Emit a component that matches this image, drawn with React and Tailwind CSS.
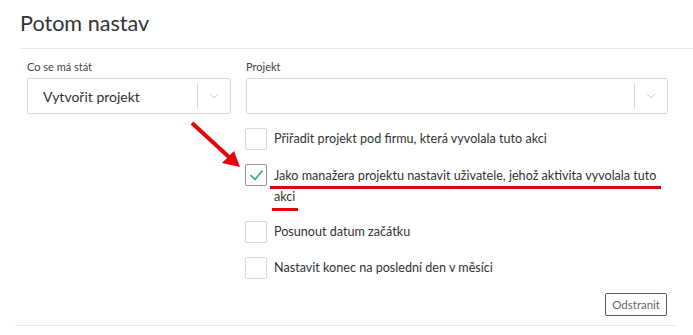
import React from 'react';

const Chevron = () => (
    <svg width="10" height="6" viewBox="0 0 10 6" fill="none">
        <path d="M1 1l4 4 4-4" stroke="#c5cad3" strokeWidth="1" />
    </svg>
);

const Select = ({ value, width }) => (
    <div className={`flex h-[36px] items-center rounded-[2px] border border-[#d6dbe3] bg-white ${width}`}>
        <div className="flex-1 pl-[15px] text-[14px] text-[#333]">{value}</div>
        <div className="h-[26px] w-px bg-[#d6dbe3]" />
        <div className="flex w-[32px] items-center justify-center">
            <Chevron />
        </div>
    </div>
);

const Checkbox = ({ checked }) => (
    <div
        className={`flex h-[22px] w-[22px] shrink-0 items-center justify-center rounded-[2px] border ${
            checked ? 'border-[#8f959e]' : 'border-[#d6dbe3]'
        } bg-white`}
    >
        {checked && (
            <svg width="15" height="12" viewBox="0 0 15 12" fill="none">
                <path d="M1.5 6l4.5 4.5 7.5-9" stroke="#3fae6a" strokeWidth="1.7" />
            </svg>
        )}
    </div>
);

const App = () => {
    return (
        <div className="relative h-[335px] w-[693px] overflow-hidden bg-white font-['Lato',sans-serif] text-[#333]">
            {/* Header */}
            <div className="ml-[20px] flex h-[49px] items-start border-b border-[#e6e6e6] pt-[9px]">
                <h1 className="text-[21.6px] leading-[28px] text-[#333]">Potom nastav</h1>
            </div>

            {/* Fields */}
            <div className="ml-[27px] mt-[11px] flex gap-[15px]">
                <div>
                    <div className="mb-[5px] text-[11px] leading-[13px] text-[#444]">Co se má stát</div>
                    <Select value="Vytvořit projekt" width="w-[204px]" />
                </div>
                <div>
                    <div className="mb-[5px] text-[11px] leading-[13px] text-[#444]">Projekt</div>
                    <Select value="" width="w-[422px]" />
                </div>
            </div>

            {/* Options */}
            <div className="ml-[245px] mt-[14px] flex flex-col text-[12.6px] text-[#333]">
                <div className="flex items-start gap-[7px]">
                    <Checkbox />
                    <div className="pt-[1px] leading-[20px]">Přiřadit projekt pod firmu, která vyvolala tuto akci</div>
                </div>
                <div className="mt-[14px] flex items-start gap-[7px]">
                    <Checkbox checked />
                    <div className="w-[400px] pt-[1px] leading-[21px]">
                        <span className="relative">
                            Jako manažera projektu nastavit uživatele, jehož aktivita vyvolala tuto
                            <span className="absolute left-[-4px] right-[-4px] top-[18px] h-[3px] bg-[#e8000b]" />
                        </span>
                        <br />
                        <span className="relative">
                            akci
                            <span className="absolute left-[-2px] right-[-3px] top-[19px] h-[3px] bg-[#e8000b]" />
                        </span>
                    </div>
                </div>
                <div className="mt-[14px] flex items-start gap-[7px]">
                    <Checkbox />
                    <div className="pt-[1px] leading-[20px]">Posunout datum začátku</div>
                </div>
                <div className="mt-[14px] flex items-start gap-[7px]">
                    <Checkbox />
                    <div className="pt-[1px] leading-[20px]">Nastavit konec na poslední den v měsíci</div>
                </div>
            </div>

            {/* Footer */}
            <div className="ml-[15px] mr-[18px] mt-[14px] flex justify-end border-b border-[#e6e6e6] pb-[9px] pr-[8px]">
                <button className="h-[23px] rounded-[2px] border border-[#4b5a7d] px-[6px] text-[11.5px] text-[#666]">
                    Odstranit
                </button>
            </div>

            {/* Arrow annotation */}
            <svg className="absolute left-[185px] top-[117px]" width="65" height="60" viewBox="0 0 65 60">
                <path d="M7 6L45 41" stroke="#e8000b" strokeWidth="4" strokeLinecap="butt" />
                <path d="M55 50L37 46L49 34Z" fill="#e8000b" />
            </svg>
        </div>
    );
};

export default App;
